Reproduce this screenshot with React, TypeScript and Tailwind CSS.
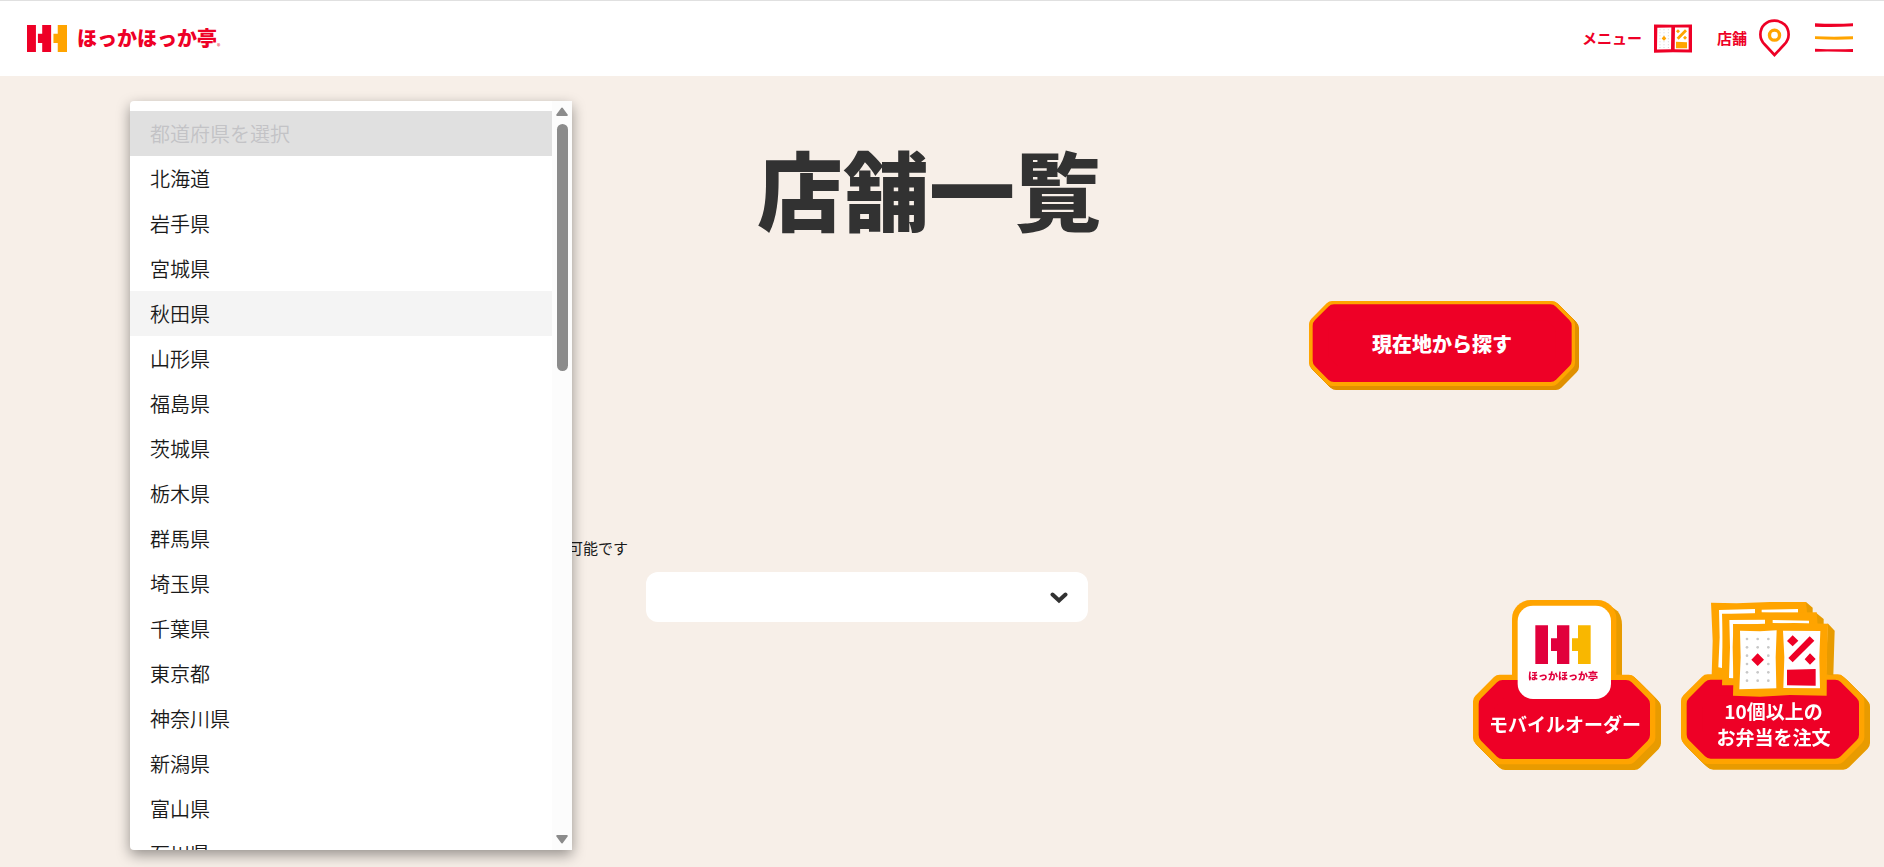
import { useState } from 'react';

const PREFECTURES = [
  '北海道', '岩手県', '宮城県', '秋田県', '山形県', '福島県', '茨城県', '栃木県', '群馬県',
  '埼玉県', '千葉県', '東京都', '神奈川県', '新潟県', '富山県', '石川県'
];

const DOT_COLUMNS = [861, 893, 925];
const DOT_ROWS = [175, 200, 225, 250, 275, 300];

interface OctagonProps {
  x: number;
  y: number;
  w: number;
  h: number;
  cut: number;
  color: string;
}

// Octagon with softened corners: the round stroke supplies the radius.
function Octagon({ x, y, w, h, cut, color }: OctagonProps) {
  const r = 24;
  const c = cut - r * 0.586;
  const l = x + r;
  const t = y + r;
  const rt = x + w - r;
  const b = y + h - r;
  return (
    <path
      d={`M${l + c} ${t}H${rt - c}L${rt} ${t + c}V${b - c}L${rt - c} ${b}H${l + c}L${l} ${b - c}V${t + c}Z`}
      fill={color}
      stroke={color}
      strokeWidth={r * 2}
      strokeLinejoin="round"
    />
  );
}

// Thick side of a plate, swept down and to the right of its face.
function OctagonSide({ depth, ...face }: OctagonProps & { depth: number }) {
  const steps = Array.from({ length: 9 }, (_, i) => (depth * (i + 1)) / 9);
  return (
    <>
      {steps.map((d) => (
        <Octagon key={d} {...face} x={face.x + d} y={face.y + d} />
      ))}
    </>
  );
}

function BrandMark() {
  return (
    <svg viewBox="81 75 121 81" className="h-[27px] w-10" aria-hidden="true">
      <path fill="#ee0026" d="M81 75h27v81H81zM127 75h27v81h-27v-27h-13v-28h13z" />
      <path fill="#ffa400" d="M174 75h28v81h-28v-27h-13v-28h13z" />
    </svg>
  );
}

function MenuIcon() {
  return (
    <svg viewBox="282 71 114 86" className="h-[29px] w-[38px]" aria-hidden="true">
      <path fill="#ee0026" fillRule="evenodd" d="M282 72l57 1 57-1v84l-57-1-57 2zM292 82l-1 65 42-1 1-65zM345 81l-1 65 42 1V81z" />
      <g fill="#c9c9c9">
        {[88, 97, 106, 115, 124, 133, 141].map((y) =>
          [300, 312, 325].map((x) => <circle key={`${x}-${y}`} cx={x} cy={y} r="1.6" />)
        )}
      </g>
      <path fill="#ffa400" d="M312 106l7 8-7 7-7-7zM348 124l33 1v18h-33zM354 86l6 6-6 6-6-6zM375 106l6 6-6 6-6-6zM375 86l6 6-25 26-6-6z" />
    </svg>
  );
}

function PinIcon() {
  return (
    <svg viewBox="598 56 92 113" className="h-[38px] w-[31px]" aria-hidden="true">
      <path
        d="M644 163L615 132C606 123 602 114 602 102C602 78 620 61 644 61S686 78 686 102C686 114 682 123 673 132Z"
        fill="none"
        stroke="#ee0026"
        strokeWidth="8"
      />
      <circle cx="644" cy="104" r="15" fill="none" stroke="#ffa400" strokeWidth="10" />
    </svg>
  );
}

function HamburgerIcon() {
  return (
    <svg viewBox="765 71 114 90" className="h-[30px] w-[38px]" aria-hidden="true">
      <path fill="#ee0026" d="M765 72q57 3 114 0v9q-57 3-114 1zM765 148q57 3 114 1v9q-57-2-114-1z" />
      <path fill="#ffa400" d="M765 111q57 2 114 0v9q-57 3-114-1z" />
    </svg>
  );
}

function Header() {
  return (
    <header className="flex h-[76px] items-center justify-between border-t border-[#e0e0e0] bg-white pr-[31px] pb-px pl-[27px] text-[#ee0026]">
      <a href="#" className="flex items-center gap-[10px]">
        <BrandMark />
        <span className="flex items-end text-xl leading-7 font-black">
          ほっかほっか亭
          <span className="text-[7px] leading-3 font-normal">®</span>
        </span>
      </a>
      <nav className="flex items-center gap-[25px] text-[15px] font-bold">
        <a href="#menu" className="flex items-center gap-3">
          メニュー
          <MenuIcon />
        </a>
        <a href="#shops" className="flex items-center gap-3">
          店舗
          <PinIcon />
        </a>
        <button type="button" aria-label="メニューを開く">
          <HamburgerIcon />
        </button>
      </nav>
    </header>
  );
}

interface PrefectureMenuProps {
  value: string;
  onSelect: (name: string) => void;
}

function PrefectureMenu({ value, onSelect }: PrefectureMenuProps) {
  return (
    <div className="absolute top-[25px] left-[130px] z-10 flex h-[749px] w-[442px] overflow-hidden rounded-l bg-white shadow-[0_5px_14px_rgba(0,0,0,0.4)]">
      <div role="listbox" aria-label="都道府県" className="flex-1 overflow-hidden pt-[10px] text-xl font-[350] text-[#1a1a1a]">
        <button type="button" role="option" aria-selected={false} disabled className="block h-[45px] w-full bg-[#e0e0e0] px-5 text-left text-[#c3c3c6]">
          都道府県を選択
        </button>
        {PREFECTURES.map((name) => (
          <button
            key={name}
            type="button"
            role="option"
            aria-selected={name === value}
            onClick={() => onSelect(name)}
            className={`block h-[45px] w-full px-5 text-left hover:bg-[#f4f4f4] ${name === value ? 'bg-[#f4f4f4]' : ''}`}
          >
            {name}
          </button>
        ))}
      </div>
      <div className="flex w-5 flex-col items-center justify-between bg-[#fcfcfc] py-[6px]">
        <svg viewBox="0 0 12 9" className="h-[9px] w-3" aria-hidden="true">
          <path d="M6 1.5L10.8 8H1.2Z" fill="#8b8b8b" stroke="#8b8b8b" strokeWidth="2" strokeLinejoin="round" />
        </svg>
        <div className="mt-2 mb-auto h-[247px] w-[11px] rounded-full bg-[#8b8b8b]" />
        <svg viewBox="0 0 12 9" className="h-[9px] w-3" aria-hidden="true">
          <path d="M6 7.5L10.8 1H1.2Z" fill="#8b8b8b" stroke="#8b8b8b" strokeWidth="2" strokeLinejoin="round" />
        </svg>
      </div>
    </div>
  );
}

interface SelectBoxProps {
  label: string;
  options?: string[];
}

function SelectBox({ label, options = [] }: SelectBoxProps) {
  return (
    <div className="relative w-[442px]">
      <select aria-label={label} className="h-[50px] w-full appearance-none rounded-xl bg-white px-5 text-xl">
        <option value="" />
        {options.map((o) => (
          <option key={o}>{o}</option>
        ))}
      </select>
      <svg viewBox="0 0 18 12" className="pointer-events-none absolute top-5 right-5 h-3 w-[18px]" aria-hidden="true">
        <path d="M2.5 2.5L9 8.5L15.5 2.5" fill="none" stroke="#323232" strokeWidth="4" strokeLinecap="round" />
      </svg>
    </div>
  );
}

function MobileOrderLink() {
  return (
    <a href="#mobile-order" className="relative block h-[170px] w-[188px] text-white">
      <svg viewBox="39 60 564 510" className="h-full w-full" aria-hidden="true">
        <path fill="#e89b00" d="M400 60L440 69L473 94Q486 110 486 135V320H300Z" />
        <OctagonSide x={39} y={284} w={547} h={269} cut={70} depth={17} color="#e89b00" />
        <rect x="156" y="60" width="313" height="300" rx="56" fill="#ffa400" />
        <Octagon x={39} y={284} w={547} h={269} cut={70} color="#ffa400" />
        <Octagon x={56} y={300} w={514} h={237} cut={62} color="#ee0026" />
        <rect x="173" y="77" width="280" height="280" rx="46" fill="#fff" />
        <path fill="#e1003c" d="M226 136h38v116h-38zM291 136h37v116h-37v-39h-18v-38h18z" />
        <path fill="#f9b700" d="M354 136h38v116h-38v-39h-18v-38h18z" />
      </svg>
      <span className="absolute inset-x-0 top-[68px] pr-2 text-center text-[10px] leading-4 font-black text-[#e1003c]">
        ほっかほっか亭
      </span>
      <span className="absolute inset-x-0 top-[111px] pr-1 text-center text-[19px] leading-[26px] font-bold whitespace-nowrap">
        モバイルオーダー
      </span>
    </a>
  );
}

function BulkOrderLink() {
  return (
    <a href="#bulk-order" className="relative block h-[170px] w-[189px] text-white">
      <svg viewBox="663 58 567 510" className="h-full w-full" aria-hidden="true">
        <OctagonSide x={663} y={281} w={550} h={269} cut={70} depth={17} color="#e89b00" />
        <Octagon x={663} y={281} w={550} h={269} cut={70} color="#ffa400" />
        <Octagon x={680} y={297} w={517} h={237} cut={62} color="#ee0026" />
        {/* three stacked menu leaflets, back to front */}
        <path fill="#e89b00" d="M1038 64L1058 81V110L1030 100ZM1068 96L1091 115V140L1060 130ZM1103 128L1124 150L1120 284L1098 282Z" />
        <path fill="#ffa400" d="M753 66L830 68L930 64L1038 64L1042 105L800 290L755 284L758 180Z" />
        <path fill="#fff" d="M777 88L885 85V98L789 101L786 262L775 260L779 170ZM905 87L1014 85V96L905 95Z" />
        <path fill="#ffa400" d="M786 99L880 99L950 96L1070 95L1073 135L830 314L786 314L789 200Z" />
        <path fill="#fff" d="M808 118L915 117V129L820 132L818 200L820 293L807 292L810 200ZM938 118L1047 120V130L938 127Z" />
        <path fill="#ffa400" d="M819 130L900 131L1000 127L1104 129L1101 220L1100 345L990 343L900 348L819 345L822 230Z" />
        <path fill="#fff" d="M840 150L900 152L950 149L947 230L949 323L838 326L842 230ZM969 150L1081 151L1078 230L1080 323L970 322L973 230Z" />
        <g fill="#c8c8c8">
          {DOT_ROWS.map((y) => DOT_COLUMNS.map((x) => <circle key={`${x}-${y}`} cx={x} cy={y} r="4" />))}
        </g>
        <path fill="#ee0026" d="M893 218L912 237L893 256L874 237ZM998 164L1015 180L998 197L981 181ZM1050 218L1067 235L1050 252L1034 236ZM1049 167L1063 180L998 245L985 232ZM981 267L1067 265V315L981 314Z" />
      </svg>
      <span className="absolute inset-x-0 top-[98px] pr-1 text-center text-[19px] leading-[26px] font-bold whitespace-nowrap">
        10個以上の
        <br />
        お弁当を注文
      </span>
    </a>
  );
}

export default function App() {
  const [prefecture, setPrefecture] = useState('秋田県');

  return (
    <div className="flex min-h-screen flex-col bg-[#f7efe8] font-['Noto_Sans_CJK_JP',sans-serif] text-[#323232]">
      <Header />

      <main className="relative flex-1 pr-[156px] pl-[130px]">
        <PrefectureMenu value={prefecture} onSelect={setPrefecture} />

        <h1 className="pt-[52px] text-center text-[86px] leading-[120px] font-black">店舗一覧</h1>

        <div className="mt-[53px] flex justify-end pr-[149px]">
          <button type="button" className="relative h-[89px] w-[270px] pr-1 pb-1 text-xl font-black text-white">
            <svg viewBox="57 63 810 267" className="absolute inset-0 h-full w-full" aria-hidden="true">
              <OctagonSide x={57} y={63} w={798} h={255} cut={60} depth={12} color="#e09000" />
              <Octagon x={57} y={63} w={798} h={255} cut={60} color="#ffa400" />
              <Octagon x={68} y={73} w={777} h={233} cut={54} color="#ee0026" />
            </svg>
            <span className="relative">現在地から探す</span>
          </button>
        </div>

        <p className="mt-[146px] w-[498px] text-right text-[15px] leading-6 text-[#1a1a1a]">可能です</p>
        <div className="mt-3 flex gap-[74px]">
          <SelectBox label="都道府県" options={PREFECTURES} />
          <SelectBox label="市区町村" />
        </div>
      </main>

      <aside className="fixed right-[14px] bottom-[97px] flex gap-5">
        <MobileOrderLink />
        <BulkOrderLink />
      </aside>
    </div>
  );
}
